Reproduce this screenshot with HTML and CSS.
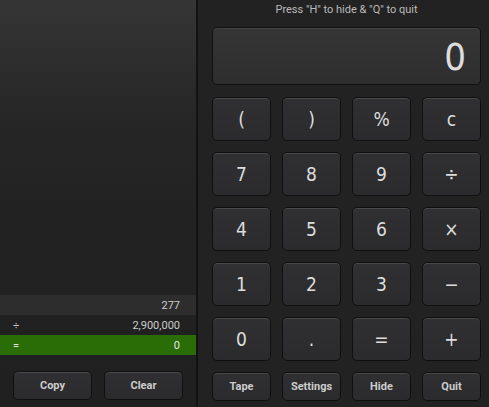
FILE: index.html
```html
<!DOCTYPE html>
<html>
<head>
    <meta charset="UTF-8">
    <title>Calculator</title>
    <link rel="stylesheet" href="styles.css">
</head>
<body>
    <div class="tape-panel">
        <div class="tape-space"></div>
        <div class="tape">
            <div class="tape-row first"><span class="op"></span><span class="num">277</span></div>
            <div class="tape-row"><span class="op">÷</span><span class="num">2,900,000</span></div>
            <div class="tape-row result"><span class="op">=</span><span class="num">0</span></div>
        </div>
        <div class="tape-actions">
            <button class="btn small">Copy</button>
            <button class="btn small">Clear</button>
        </div>
    </div>

    <div class="calc">
        <div class="hint">Press "H" to hide &amp; "Q" to quit</div>
        <div class="display">0</div>
        <div class="keys">
            <button class="btn">(</button>
            <button class="btn">)</button>
            <button class="btn">%</button>
            <button class="btn">c</button>
            <button class="btn">7</button>
            <button class="btn">8</button>
            <button class="btn">9</button>
            <button class="btn">÷</button>
            <button class="btn">4</button>
            <button class="btn">5</button>
            <button class="btn">6</button>
            <button class="btn">×</button>
            <button class="btn">1</button>
            <button class="btn">2</button>
            <button class="btn">3</button>
            <button class="btn">−</button>
            <button class="btn">0</button>
            <button class="btn">.</button>
            <button class="btn">=</button>
            <button class="btn">+</button>
        </div>
        <div class="menu">
            <button class="btn small">Tape</button>
            <button class="btn small">Settings</button>
            <button class="btn small">Hide</button>
            <button class="btn small">Quit</button>
        </div>
    </div>
</body>
</html>
```

FILE: styles.css
```css
html, body {
    margin: 0;
    padding: 0;
    height: 100%;
}

body {
    display: flex;
    overflow: hidden;
    background-color: #222;
    color: #ddd;
    font-family: Roboto, "DejaVu Sans", sans-serif;
}

/* left side: calculation tape */
.tape-panel {
    width: 196px;
    border-right: 2px solid #121212;
    display: flex;
    flex-direction: column;
    background: linear-gradient(to bottom, #353535 0px, #262626 120px, #222 220px, #202020 100%);
}

.tape-space {
    flex: 1;
}

.tape {
    margin-bottom: 16px;
}

.tape-row {
    height: 20px;
    display: flex;
    align-items: center;
    justify-content: space-between;
    padding: 0 16px 0 13px;
    font-size: 11px;
    color: #ccc;
}

.tape-row.first {
    background-color: #2d2d2d;
}

.tape-row.result {
    background-color: #2a6c06;
    color: #e6e6e6;
}

.tape-actions {
    display: flex;
    gap: 12px;
    padding: 0 13px 7px 13px;
}

.tape-actions .btn {
    flex: 1;
}

/* right side: keypad */
.calc {
    flex: 1;
    display: flex;
    flex-direction: column;
    padding: 0 8px 7px 14px;
}

.hint {
    height: 20px;
    line-height: 20px;
    margin-bottom: 7px;
    text-align: center;
    font-size: 11px;
    color: #bbb;
}

.display {
    height: 56px;
    line-height: 58px;
    border: 1px solid #111;
    border-radius: 5px;
    background: linear-gradient(to bottom, #353535, #2e2e2e);
    box-shadow: inset 0 1px 0 rgba(255, 255, 255, 0.08);
    text-align: right;
    padding-right: 14px;
    font-family: "DejaVu Sans", sans-serif;
    font-stretch: condensed;
    font-size: 38px;
    color: #ddd;
    margin-bottom: 12px;
}

.keys {
    display: grid;
    grid-template-columns: repeat(4, 1fr);
    grid-auto-rows: 44px;
    column-gap: 11px;
    row-gap: 11px;
    margin-bottom: 11px;
}

.keys .btn {
    font-family: "DejaVu Sans", sans-serif;
    font-stretch: condensed;
}

.menu {
    display: grid;
    grid-template-columns: repeat(4, 1fr);
    column-gap: 11px;
}

.btn {
    margin: 0;
    padding: 0;
    font-family: inherit;
    font-size: 19px;
    color: #ddd;
    background: linear-gradient(to bottom, #303032, #2b2b2d);
    border: 1px solid #0f0f0f;
    border-radius: 5px;
    box-shadow: inset 0 1px 0 rgba(255, 255, 255, 0.12);
    cursor: pointer;
}

.btn.small {
    height: 29px;
    font-size: 11px;
    font-weight: bold;
    color: #ccc;
}

.btn:hover {
    background: #3a3a3c;
}
```
